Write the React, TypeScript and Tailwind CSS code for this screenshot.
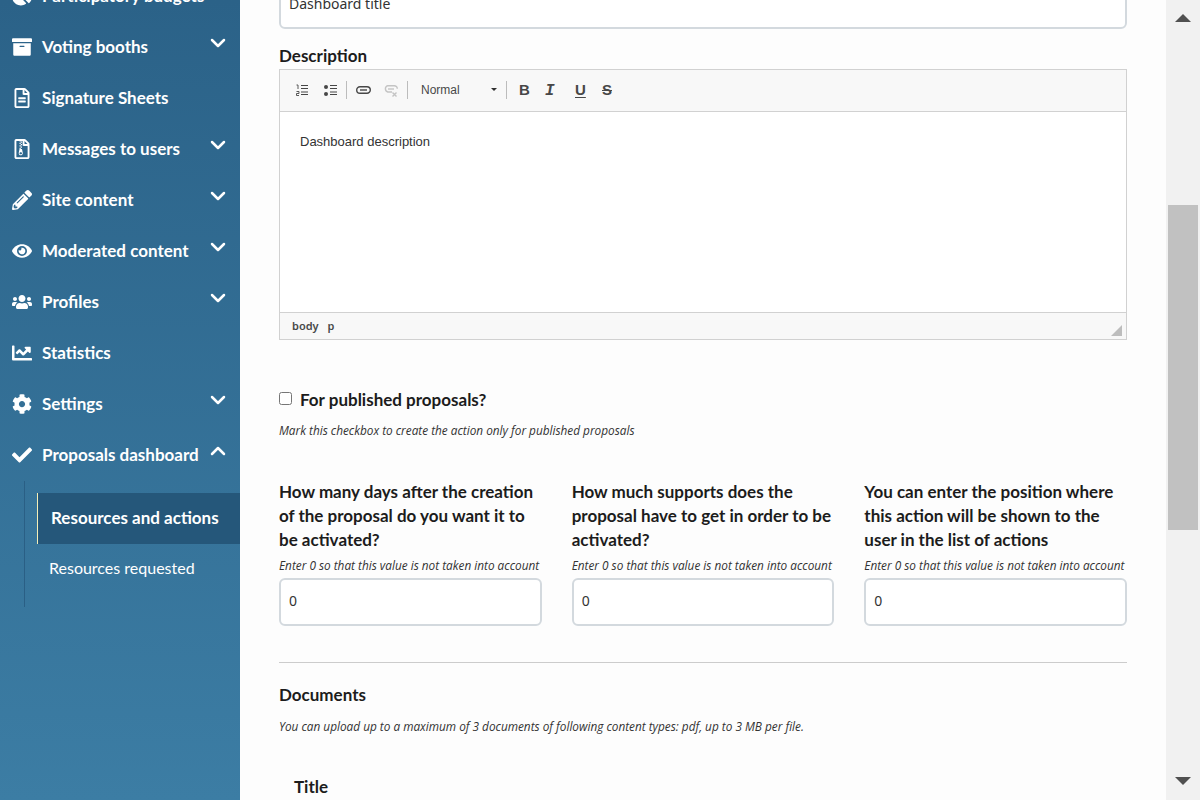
import { ReactNode } from 'react';
import { FaArchive, FaChartLine, FaChartPie, FaCheck, FaCog, FaEye, FaPencilAlt, FaRegFileAlt, FaRegFileArchive, FaUsers } from 'react-icons/fa';
import { ChevronDown, ChevronUp } from 'lucide-react';

const menu = [
  { label: 'Voting booths', icon: <FaArchive className="w-5 h-5" />, arrow: true },
  { label: 'Signature Sheets', icon: <FaRegFileAlt className="w-5 h-5" />, arrow: false },
  { label: 'Messages to users', icon: <FaRegFileArchive className="w-5 h-5" />, arrow: true },
  { label: 'Site content', icon: <FaPencilAlt className="w-5 h-5" />, arrow: true },
  { label: 'Moderated content', icon: <FaEye className="w-5 h-5" />, arrow: true },
  { label: 'Profiles', icon: <FaUsers className="w-5 h-5" />, arrow: true },
  { label: 'Statistics', icon: <FaChartLine className="w-5 h-5" />, arrow: false },
  { label: 'Settings', icon: <FaCog className="w-5 h-5" />, arrow: true },
];

const fields = [
  'How many days after the creation of the proposal do you want it to be activated?',
  'How much supports does the proposal have to get in order to be activated?',
  'You can enter the position where this action will be shown to the user in the list of actions',
];

function MenuRow({ icon, label, children }: { icon: ReactNode; label: string; children?: ReactNode }) {
  return (
    <div className="h-[51px] flex items-center pl-[12px] pr-[10px]">
      <span className="w-[20px] flex justify-center">{icon}</span>
      <span className="ml-[10px] flex-1 text-[17px] font-bold whitespace-nowrap">{label}</span>
      {children}
    </div>
  );
}

function Sidebar() {
  return (
    <aside className="w-[240px] h-[800px] shrink-0 overflow-hidden bg-gradient-to-b from-[#2b6288] to-[#3c7da4] text-white font-['Lato',sans-serif]">
      <div className="-mt-[30px]">
        <MenuRow icon={<FaChartPie className="w-5 h-5" />} label="Participatory budgets">
          <ChevronDown className="w-6 h-6 -mt-2 -ml-2" strokeWidth={2.5} />
        </MenuRow>
        {menu.map((item) => (
          <MenuRow key={item.label} icon={item.icon} label={item.label}>
            {item.arrow && <ChevronDown className="w-6 h-6 -mt-2" strokeWidth={2.5} />}
          </MenuRow>
        ))}
        <MenuRow icon={<FaCheck className="w-5 h-5" />} label="Proposals dashboard">
          <ChevronUp className="w-6 h-6 -mt-2 -ml-2" strokeWidth={2.5} />
        </MenuRow>
        {/* Submenu */}
        <div className="mt-px ml-[24px] h-[126px] border-l border-[#2a5f85] pt-[12px] pl-[12px]">
          <div className="h-[51px] flex items-center pl-[13px] pb-[2px] bg-[#25577a] border-l border-[#f4efb8] text-[17px] font-bold whitespace-nowrap">
            Resources and actions
          </div>
          <div className="h-[49px] flex items-center pl-[12px] pb-[2px] text-[16px]">Resources requested</div>
        </div>
      </div>
    </aside>
  );
}

function Toolbar() {
  return (
    <div className="h-[42px] flex items-center bg-[#f8f8f8] border-b border-[#d1d1d1] pl-[16px] pb-[2px] text-[#474747] font-['Liberation_Sans',sans-serif]">
      <svg width="12" height="12" viewBox="0 0 12 12" fill="none" stroke="#474747">
        <path d="M5 1.5h7M5 4.5h7M5 8h7M5 10.5h7" />
        <path d="M0.5 1h1.5v4M0.5 7.5h2.5v2h-2.5v2h2.5" strokeWidth="0.9" />
      </svg>
      <svg width="13" height="12" viewBox="0 0 13 12" className="ml-[16px]" fill="none" stroke="#474747">
        <circle cx="2" cy="3" r="2" fill="#474747" stroke="none" />
        <circle cx="2" cy="10" r="2" fill="#474747" stroke="none" />
        <path d="M6 1.5h7M6 4.5h7M6 8h7M6 10.5h7" />
      </svg>
      <span className="ml-[9px] w-px h-[18px] bg-[#bcbcbc]" />
      <svg width="15" height="8" viewBox="0 0 15 8" className="ml-[9px]" fill="none" stroke="#474747" strokeWidth="1.4">
        <rect x="0.7" y="0.7" width="13.6" height="6.6" rx="3.3" />
        <path d="M4 4h7" />
      </svg>
      <svg width="14" height="12" viewBox="0 0 14 12" className="ml-[13px] mt-[3px]" fill="none" stroke="#c4c4c4" strokeWidth="1.4">
        <path d="M8 7H3.7a3.3 3.3 0 0 1 0-6.3h6.6a3 3 0 0 1 3 3" />
        <path d="M4 4h6" />
        <path d="M8.5 7.5l4 4M12.5 7.5l-4 4" />
      </svg>
      <span className="ml-[9px] w-px h-[18px] bg-[#bcbcbc]" />
      <span className="ml-[13px] w-[70px] text-[12px] text-[#484848]">Normal</span>
      <span className="w-0 h-0 border-x-[3px] border-x-transparent border-t-[3px] border-t-[#2f2f2f]" />
      <span className="ml-[9px] w-px h-[18px] bg-[#bcbcbc]" />
      <span className="ml-[12px] w-[9px] text-[15px] font-bold leading-none">B</span>
      <span className="ml-[17px] mt-[2px] w-[8px] text-[16px] font-bold italic leading-none font-['Liberation_Mono',monospace]">I</span>
      <span className="ml-[22px] w-[9px] text-[15px] font-bold underline underline-offset-2 leading-none">U</span>
      <span className="ml-[18px] w-[11px] text-[15px] font-bold line-through leading-none">S</span>
    </div>
  );
}

function Editor() {
  return (
    <div className="h-[271px] border border-[#d1d1d1] bg-white">
      <Toolbar />
      <div className="h-[200px] pt-[21px] pl-[20px] text-[13px] leading-[18px] text-[#333333] font-['Liberation_Sans',sans-serif]">
        Dashboard description
      </div>
      <div className="h-[27px] border-t border-[#d1d1d1] bg-[#f8f8f8] flex items-center justify-between pl-[12px] pr-[4px]">
        <div className="flex gap-[9px] text-[11px] font-semibold text-[#484848] font-['Noto_Sans',sans-serif]">
          <span>body</span>
          <span>p</span>
        </div>
        <span className="w-0 h-0 mt-[8px] border-l-[11px] border-l-transparent border-b-[11px] border-b-[#bdbdbd]" />
      </div>
    </div>
  );
}

function Scrollbar() {
  return (
    <div className="w-[34px] h-[800px] shrink-0 bg-[#f1f1f1] flex flex-col items-center">
      <span className="mt-[14px] w-0 h-0 border-x-[8px] border-x-transparent border-b-[8px] border-b-[#505050]" />
      <div className="mt-[183px] w-[30px] h-[325px] bg-[#c1c1c1]" />
      <span className="mt-[247px] w-0 h-0 border-x-[8px] border-x-transparent border-t-[8px] border-t-[#505050]" />
    </div>
  );
}

export default function App() {
  return (
    <div className="w-[1200px] h-[800px] flex overflow-hidden bg-[#fdfdfd]">
      <Sidebar />
      <main className="flex-1 pl-[39px] pr-[39px] text-[#1c1c1c] font-['Lato',sans-serif]">
        <div className="-mt-[19px] h-[48px] border-2 border-[#d3d9de] rounded-[6px] bg-white pl-[8px] pb-[4px] flex items-center text-[14px] text-[#333333] font-['Noto_Sans',sans-serif]">
          Dashboard title
        </div>
        <label className="block mt-[15px] h-[25px] text-[17px] leading-[24px] font-bold">Description</label>
        <Editor />
        <div className="mt-[48px] h-[24px] flex items-center">
          <input type="checkbox" className="w-[13px] h-[13px] -mt-[3px]" />
          <span className="ml-[8px] text-[17px] font-bold">For published proposals?</span>
        </div>
        <p className="mt-[8px] h-[20px] text-[11.8px] leading-[20px] italic text-[#333333] font-['Open_Sans',sans-serif]">
          Mark this checkbox to create the action only for published proposals
        </p>
        <div className="mt-[40px] grid grid-cols-3 gap-[30px]">
          {fields.map((text) => (
            <div key={text}>
              <div className="h-[72px] text-[17px] leading-[24px] font-bold">{text}</div>
              <p className="mt-[3px] h-[20px] text-[11.8px] leading-[20px] italic whitespace-nowrap text-[#333333] font-['Open_Sans',sans-serif]">
                Enter 0 so that this value is not taken into account
              </p>
              <div className="mt-[3px] h-[48px] border-2 border-[#d3d9de] rounded-[6px] bg-white pl-[8px] pb-[4px] flex items-center text-[14px] text-[#333333] font-['Noto_Sans',sans-serif]">
                0
              </div>
            </div>
          ))}
        </div>
        <hr className="mt-[36px] border-[#cccccc]" />
        <div className="mt-[20px] h-[24px] text-[17px] leading-[24px] font-bold">Documents</div>
        <p className="mt-[9px] h-[20px] text-[11.8px] leading-[20px] italic text-[#333333] font-['Open_Sans',sans-serif]">
          You can upload up to a maximum of 3 documents of following content types: pdf, up to 3 MB per file.
        </p>
        <div className="mt-[39px] pl-[15px] h-[24px] text-[17px] leading-[24px] font-bold">Title</div>
      </main>
      <Scrollbar />
    </div>
  );
}
